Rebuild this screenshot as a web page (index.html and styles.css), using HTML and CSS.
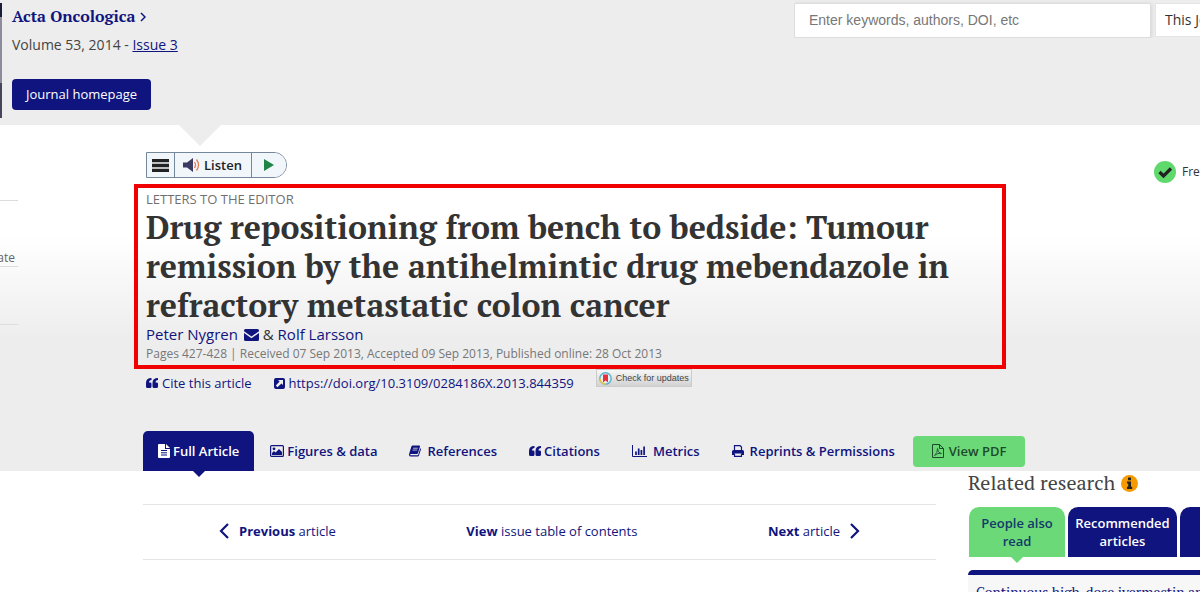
FILE: index.html
```html
<!DOCTYPE html>
<html lang="en">
<head>
<meta charset="utf-8">
<title>Drug repositioning from bench to bedside</title>
<link rel="stylesheet" href="styles.css">
</head>
<body>
<header class="journal-bar">
  <div class="cover"></div>
  <div class="journal-info">
    <a class="journal-name" href="#">Acta Oncologica <svg width="6" height="10" viewBox="0 0 6 10"><path d="M1 1l4 4-4 4" fill="none" stroke="currentColor" stroke-width="1.5"/></svg></a>
    <p class="volume">Volume 53, 2014 - <a href="#">Issue 3</a></p>
    <a class="home-button" href="#">Journal homepage</a>
  </div>
  <form class="search">
    <input class="search-text" type="text" aria-label="Search" placeholder="Enter keywords, authors, DOI, etc">
    <button class="scope" type="button">This Journal</button>
  </form>
</header>

<section class="hero">
  <div class="hero-body">
    <aside class="stats"><span></span><span>ate</span><span></span></aside>
    <div class="article-info">
      <div class="listen-bar">
        <button type="button" aria-label="Menu"><svg width="17" height="13" viewBox="0 0 17 13"><path d="M0 1.500h17M0 6.500h17M0 11.500h17" stroke="#222" stroke-width="3.600"/></svg></button>
        <button type="button" class="listen"><svg width="17" height="14" viewBox="0 0 17 14"><path d="M0 4.500h4L10 0v14L4 9.500H0z" fill="#3b3a63"/><path d="M11.500 4q2 3 0 6M13.500 1.500q4 5.500 0 11" fill="none" stroke="#e8764f" stroke-width="1.300"/></svg>Listen</button>
        <button type="button" aria-label="Play"><svg width="10" height="12" viewBox="0 0 10 12"><path d="M0 0l10 6-10 6z" fill="#1f8546"/></svg></button>
      </div>
      <div class="article-head">
        <div class="kind">LETTERS TO THE EDITOR</div>
        <h1>Drug repositioning from bench to bedside: Tumour<br>remission by the antihelmintic drug mebendazole in<br>refractory metastatic colon cancer</h1>
        <div class="authors"><a class="lead" href="#">Peter Nygren</a> <svg width="15" height="12" viewBox="0 0 15 12"><path d="M0 1.500Q0 0 1.500 0h12Q15 0 15 1.500v.7L7.500 7.500 0 2.200zM0 4l7.500 5.300L15 4v6.500q0 1.500-1.500 1.500h-12Q0 12 0 10.500z" fill="currentColor"/></svg> &amp; <a href="#">Rolf Larsson</a></div>
        <div class="dates">Pages 427-428 | Received 07 Sep 2013, Accepted 09 Sep 2013, Published online: 28 Oct 2013</div>
      </div>
      <div class="references">
        <a href="#"><svg width="12" height="10" viewBox="0 0 12 10"><path d="M5.500 0v2Q3 2 3 4.500h1.200q1.300 0 1.300 1.300v2.700Q5.500 10 4 10H1.500Q0 10 0 8.500V5Q0 0 5.500 0zM12 0v2Q9.500 2 9.500 4.500h1.200q1.300 0 1.300 1.300v2.700q0 1.500-1.500 1.500H8Q6.500 10 6.500 8.500V5Q6.500 0 12 0z" fill="currentColor"/></svg>Cite this article</a>
        <a href="#"><svg width="11" height="11" viewBox="0 0 11 11"><rect width="11" height="11" rx="2" fill="currentColor"/><path d="M4 2h5v5L7.400 5.400 3.500 9.200 1.800 7.500 5.600 3.600z" fill="#ededed"/></svg>https://doi.org/10.3109/0284186X.2013.844359</a>
        <button class="updates" type="button"><svg width="13" height="13" viewBox="0 0 13 13"><circle cx="6.500" cy="6.500" r="5.700" fill="#eee" stroke="#52b3d0" stroke-width="1.400"/><path d="M1 6.500a5.500 5.500 0 0 0 5.500 5.700" fill="none" stroke="#f2c43c" stroke-width="1.500"/><path d="M4 2.500h5v8L6.500 8.400 4 10.500z" fill="#e8303c"/></svg>Check for updates</button>
      </div>
    </div>
    <div class="access"><svg width="22" height="22" viewBox="0 0 22 22"><circle cx="11" cy="11" r="11" fill="#5fd86c"/><path d="M5.500 11l4 4 7.500-7.500" fill="none" stroke="#222" stroke-width="3.200"/></svg>Free access</div>
  </div>

  <nav class="tabs">
    <a class="tab active" href="#"><svg width="12" height="14" viewBox="0 0 12 14"><path d="M1 0h6v5h5v8q0 1-1 1H1q-1 0-1-1V1q0-1 1-1zM8 0l4 4H8z" fill="#fff"/><path d="M3 6.500h6M3 8.800h6M3 11h6" stroke="#10147e"/></svg>Full Article</a>
    <a class="tab" href="#"><svg width="14" height="12" viewBox="0 0 14 12"><rect x=".6" y=".6" width="12.800" height="10.800" rx="1" fill="none" stroke="currentColor" stroke-width="1.200"/><circle cx="4" cy="3.800" r="1.400" fill="currentColor"/><path d="M2 10V8l2-2 1.500 1.500L9 4l3 3v3z" fill="currentColor"/></svg>Figures &amp; data</a>
    <a class="tab wide" href="#"><svg width="12" height="12" viewBox="0 0 13 12"><path d="M4 0h7.200q1 0 .7 1L9.700 8.500q-.3.800-1.200.8H2q-1 0-.7.900.2.500.9.500h7q.6 0 .8-.6L12.200 3q1 .2.700 1.300L10.800 11q-.3 1-1.300 1H2Q.3 12 0 10.200q0-1 .4-2L2.500 1.300Q3 0 4 0z" fill="currentColor"/><path d="M4.500 3h5M3.900 5h5" stroke="#ededed" stroke-width=".8"/></svg>References</a>
    <a class="tab" href="#"><svg width="12" height="10" viewBox="0 0 12 10"><path d="M5.500 0v2Q3 2 3 4.500h1.200q1.300 0 1.300 1.300v2.700Q5.500 10 4 10H1.500Q0 10 0 8.500V5Q0 0 5.500 0zM12 0v2Q9.500 2 9.500 4.500h1.200q1.300 0 1.300 1.300v2.700q0 1.500-1.500 1.500H8Q6.500 10 6.500 8.500V5Q6.500 0 12 0z" fill="currentColor"/></svg>Citations</a>
    <a class="tab wide" href="#"><svg width="15" height="12" viewBox="0 0 15 12"><path d="M.5 0v11.500H15" fill="none" stroke="currentColor"/><path d="M4 10V6.500M6.700 10V3.500M9.400 10V5M12.100 10V1.500" stroke="currentColor" stroke-width="1.700"/></svg>Metrics</a>
    <a class="tab wide" href="#"><svg width="12" height="12" viewBox="0 0 12 12"><path d="M2.500 5V.6h5.500l1.500 1.500V5" fill="none" stroke="currentColor" stroke-width="1.200"/><path d="M1.500 5h9Q12 5 12 6.500V10h-2V8.500H2V10H0V6.500Q0 5 1.500 5z" fill="currentColor"/><path d="M2.500 8.500v2.900h7V8.500" fill="none" stroke="currentColor" stroke-width="1.200"/></svg>Reprints &amp; Permissions</a>
    <a class="pdf" href="#"><svg width="12" height="14" viewBox="0 0 12 14"><path d="M.5.500h7l4 4v9H.5zM7.500.500v4h4" fill="none" stroke="currentColor"/><path d="M2.500 11.500Q5.500 9 5.500 4.500q0 4.500 4 5Q6 8.500 2.500 11.500z" fill="none" stroke="currentColor" stroke-width=".8"/></svg>View PDF</a>
  </nav>
</section>

<main class="lower">
  <nav class="pager">
    <a href="#"><svg width="10" height="16" viewBox="0 0 10 16"><path d="M9 1L2 8l7 7" fill="none" stroke="currentColor" stroke-width="2.200"/></svg><span><b>Previous</b> article</span></a>
    <a href="#"><span><b>View</b> issue table of contents</span></a>
    <a href="#"><span><b>Next</b> article</span><svg width="10" height="16" viewBox="0 0 10 16"><path d="M1 1l7 7-7 7" fill="none" stroke="currentColor" stroke-width="2.200"/></svg></a>
  </nav>
  <aside class="related">
    <h2>Related research <svg width="17" height="17" viewBox="0 0 17 17"><circle cx="8.500" cy="8.500" r="8.500" fill="#f59a00"/><path d="M7 2.500h3v2.700H7zM6 6.500h4v5.300h1.200V14H6v-2.200h1.200V8.500H6z" fill="#222"/></svg></h2>
    <div class="related-tabs">
      <button class="related-tab current" type="button">People also read</button>
      <button class="related-tab" type="button">Recommended articles</button>
      <button class="related-tab" type="button" aria-label="Cited by"></button>
    </div>
    <div class="related-list"><a href="#">Continuous high-dose ivermectin appears</a></div>
  </aside>
</main>
</body>
</html>
```
FILE: styles.css
```css
* { box-sizing: border-box; }

body {
  margin: 0;
  height: 100vh;
  overflow: hidden;
  background: #fff;
  color: #333;
  font: 14px/20px "Open Sans", sans-serif;
}

a { color: #10147e; text-decoration: none; }
button { font: inherit; cursor: pointer; }
svg { flex: none; }

.journal-bar {
  position: relative;
  display: flex;
  align-items: flex-start;
  min-height: 125px;
  background: #ededed;
}
.journal-bar::after {
  content: "";
  position: absolute;
  top: 100%;
  left: 179px;
  border: solid transparent;
  border-width: 21px 21px 0;
  border-top-color: #ededed;
}
.cover {
  width: 2px;
  height: 115px;
  margin-top: 3px;
  background: linear-gradient(#1b1b3a 0 14px, #8c8c9c 14px 80px, #45455c 80px);
}
.journal-info { flex: 1; padding: 6px 0 0 10px; }
.journal-name {
  display: block;
  font: bold 16px/20px "PT Serif", "Liberation Serif", serif;
}
.volume { margin: 8px 0 24px; color: #444; line-height: 21px; }
.volume a { text-decoration: underline; }
.home-button {
  display: inline-block;
  padding: 0 14px;
  border-radius: 4px;
  background: #10147e;
  color: #fff;
  font-size: 13px;
  font-weight: 500;
  line-height: 31px;
}
.search {
  display: flex;
  gap: 4px;
  width: 406px;
  padding-top: 3px;
  overflow: hidden;
}
.search-text {
  flex: none;
  width: 357px;
  height: 35px;
  padding: 0 14px 2px;
  border: 1px solid #ddd;
  border-radius: 2px;
  background: #fff;
  box-shadow: 0 1px 4px #ccc;
  font: 14px "Liberation Sans", sans-serif;
}
.search-text::placeholder { color: #777; }
.scope {
  flex: none;
  height: 34px;
  padding: 0 9px;
  border: 1px solid #e5e5e5;
  background: #fff;
  color: #333;
}

.hero { background: linear-gradient(#fff 32%, #ededed 62%); }
.hero-body { display: flex; min-height: 306px; }
.stats {
  width: 18px;
  margin-right: 128px;
  padding-top: 10px;
  color: #666;
  font-size: 12px;
  line-height: 16px;
}
.stats span {
  display: flex;
  align-items: flex-end;
  justify-content: flex-end;
  height: 66px;
  padding-right: 3px;
  border-bottom: 1px solid #ddd;
}
.stats span:last-child { height: 58px; }
.article-info { flex: 1; padding-top: 27px; }
.listen-bar {
  display: inline-flex;
  height: 26px;
  margin-bottom: 12px;
  border: 1px solid #75879a;
  border-radius: 0 13px 13px 0;
  overflow: hidden;
}
.listen-bar button {
  display: flex;
  align-items: center;
  gap: 4px;
  padding: 0 5px;
  border: 0;
  background: #f1f6fb;
  color: #222;
}
.listen-bar button + button { border-left: 1px solid #75879a; }
.listen-bar .listen { padding: 0 9px 0 8px; font-size: 13px; font-weight: 600; }
.listen-bar button:last-child { padding: 0 12px; }

.article-head { position: relative; max-width: 854px; margin-bottom: 8px; }
.article-head::after {
  content: "";
  position: absolute;
  inset: -6px -6px -6px -12px;
  border: 4px solid #f00000;
  pointer-events: none;
}
.kind { color: #707070; font-size: 13px; line-height: 18px; }
h1 {
  margin: 0;
  font: bold 32px/39px "PT Serif", "Liberation Serif", serif;
}
.authors { font-size: 15px; line-height: 18px; }
.authors svg { margin: 0 0 -1px 2px; color: #10147e; }
.lead { font-weight: 500; }
.dates { padding-top: 2px; color: #777; font-size: 12px; line-height: 18px; }
.references {
  display: flex;
  align-items: center;
  gap: 22px;
  height: 24px;
  font-size: 13px;
}
.references a { display: flex; align-items: center; gap: 4px; }
.updates {
  display: flex;
  align-items: center;
  gap: 4px;
  height: 18px;
  margin-top: -10px;
  padding: 0 2px;
  border: 1px solid #ccc;
  background: linear-gradient(#f7f7f7, #d2d2d2);
  color: #444;
  font: 9px "Liberation Sans", sans-serif;
}
.access {
  display: flex;
  align-items: center;
  align-self: flex-start;
  gap: 6px;
  width: 46px;
  padding-top: 36px;
  overflow: hidden;
  font-size: 12px;
  white-space: nowrap;
}

.tabs {
  display: flex;
  align-items: center;
  padding-left: 143px;
  font-size: 13px;
  font-weight: 600;
  white-space: nowrap;
}
.tab, .pdf { display: flex; align-items: center; gap: 3px; }
.tab { height: 40px; padding: 0 16px; }
.wide { gap: 6px; }
.active {
  position: relative;
  border-radius: 5px 5px 0 0;
  padding: 0 15px;
  background: #10147e;
  color: #fff;
}
.active::after, .current::after {
  content: "";
  position: absolute;
  top: 100%;
  left: 50%;
  margin-left: -6px;
  border: solid transparent;
  border-width: 6px 6px 0;
  border-top-color: #10147e;
}
.pdf {
  gap: 5px;
  height: 31px;
  margin-left: 2px;
  padding: 0 19px;
  border-radius: 4px;
  background: #6bd977;
  color: #1e4a2c;
}

.lower {
  display: grid;
  grid-template-columns: 1fr 232px;
  gap: 32px;
  align-items: start;
  padding-left: 143px;
}
.pager {
  display: flex;
  justify-content: space-between;
  margin-top: 33px;
  padding: 16px 76px 18px;
  border: solid #e4e4e4;
  border-width: 1px 0;
  font-size: 13px;
}
.pager a { display: flex; align-items: center; gap: 10px; }
.pager b { font-weight: 700; }
.related { overflow: hidden; }
h2 {
  margin: 0;
  color: #444;
  font: 20px/24px "PT Serif", "Liberation Serif", serif;
}
h2 svg { margin: 0 0 -2px 1px; }
.related-tabs { display: flex; gap: 3px; margin: 12px 0 13px 1px; }
.related-tab {
  position: relative;
  flex: none;
  width: 109px;
  height: 50px;
  padding: 0 6px;
  border: 0;
  border-radius: 10px 10px 0 0;
  background: #10147e;
  color: #fff;
  font-size: 13px;
  font-weight: 600;
  line-height: 18px;
}
.current { width: 96px; background: #6bd977; color: #123a6a; }
.current::after { border-top-color: #6bd977; }
.related-list {
  padding: 7px 8px;
  border-top: 5px solid #10147e;
  border-radius: 5px 0 0;
  background: #f7f7f7;
  font: 14px/20px "PT Serif", "Liberation Serif", serif;
  white-space: nowrap;
}
```
